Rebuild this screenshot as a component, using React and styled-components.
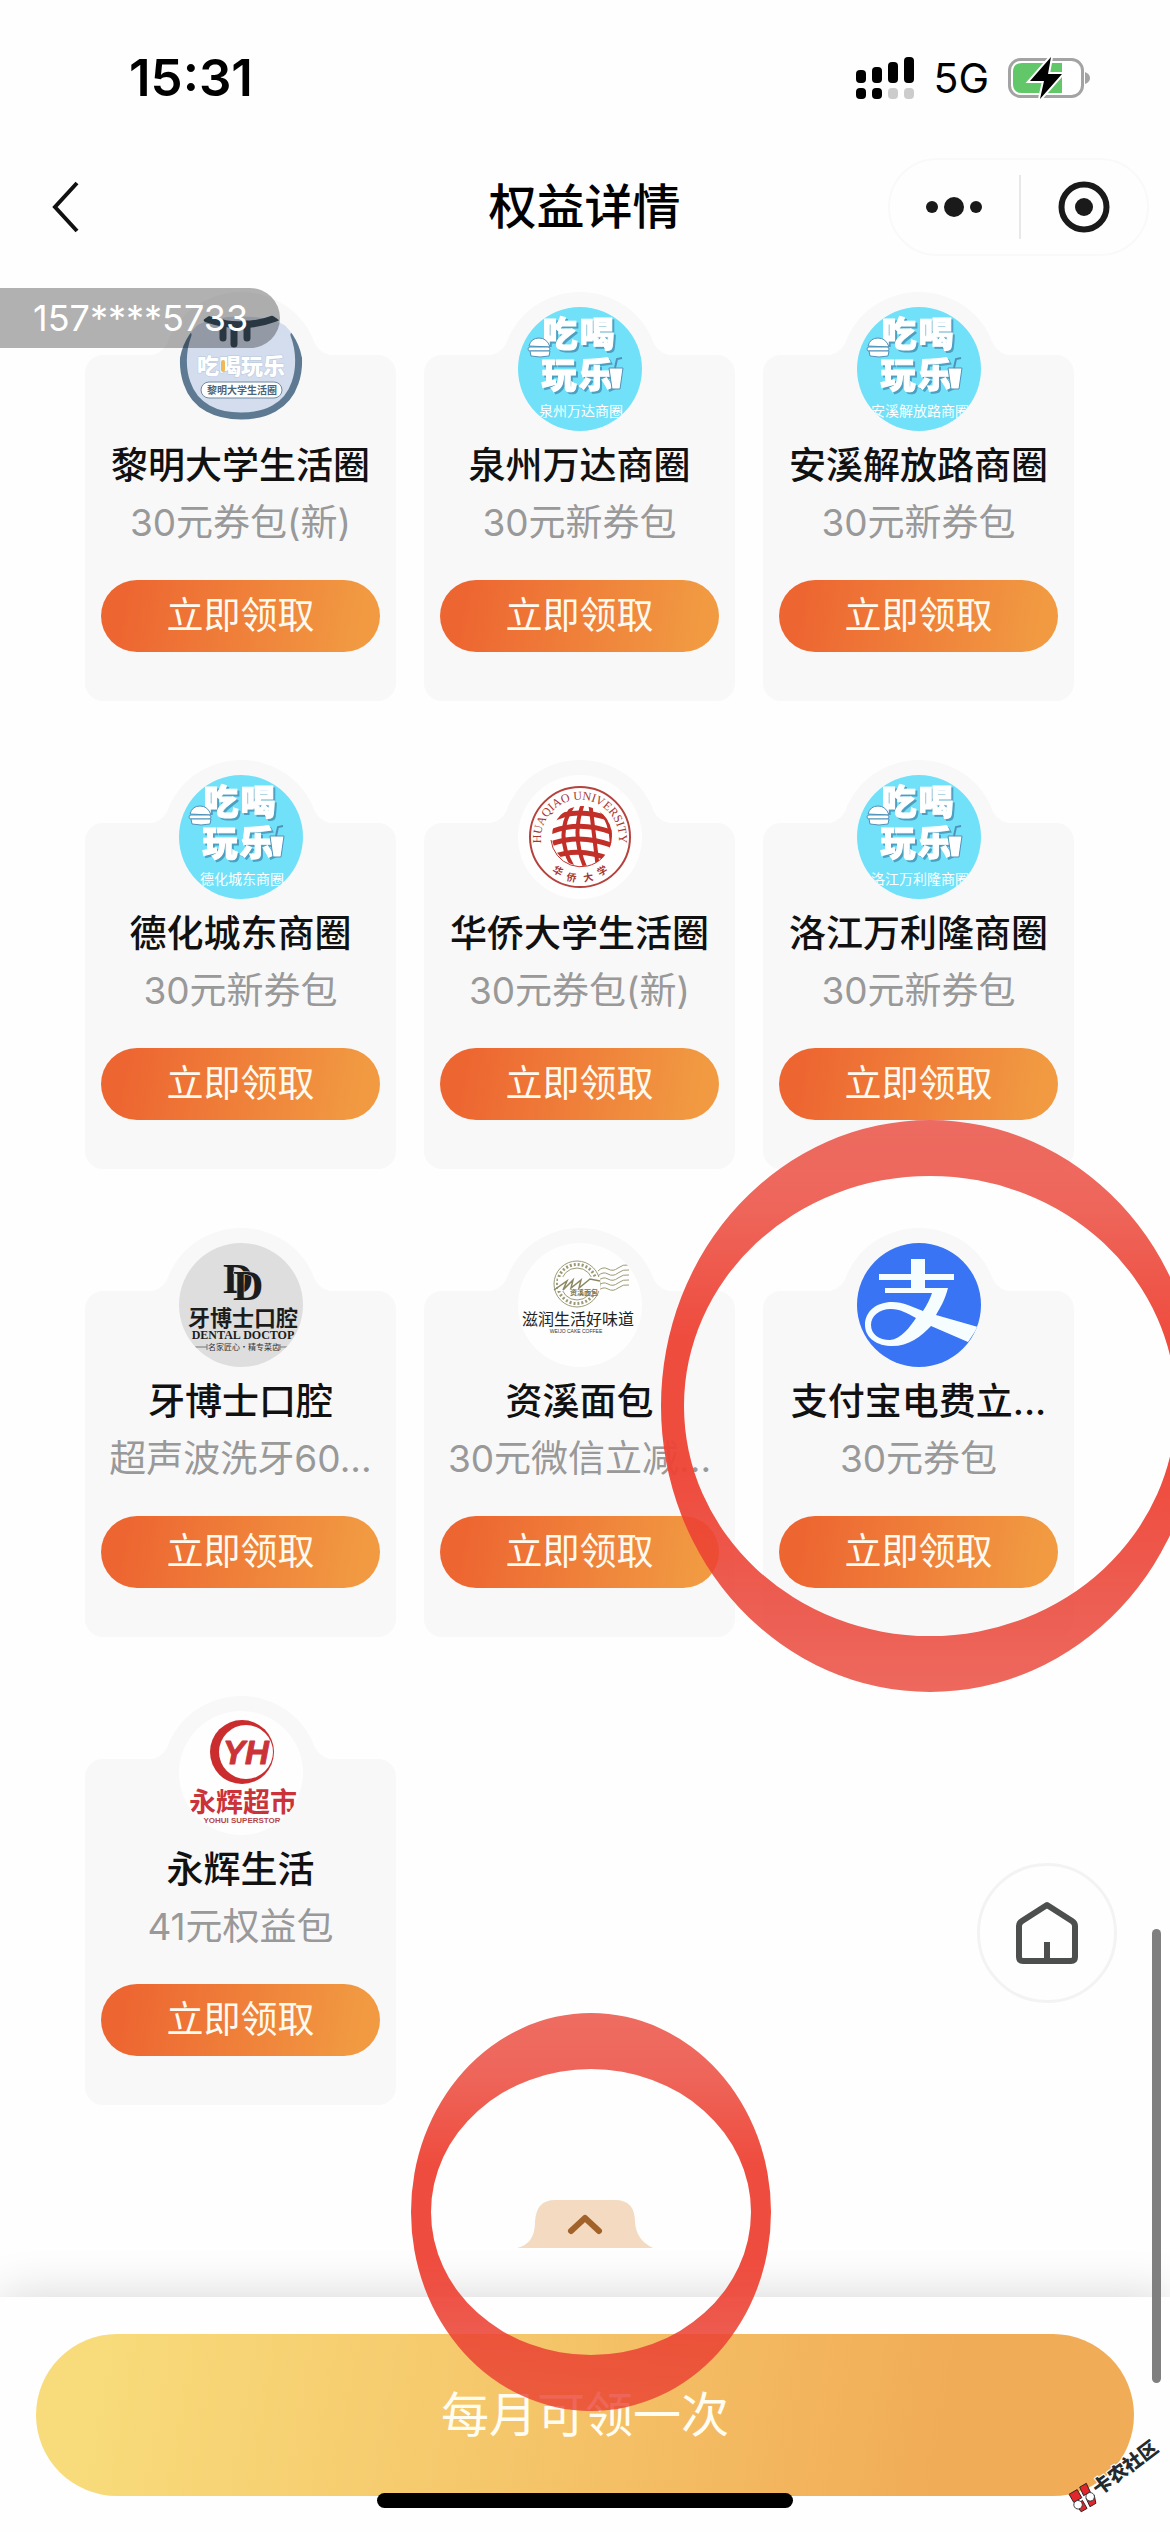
import React from "react";
import styled, { createGlobalStyle } from "styled-components";

const GlobalStyle = createGlobalStyle`
  * { box-sizing: border-box; }
  body {
    margin: 0;
    background: #fefefe;
    font-family: "Inter", "Noto Sans CJK SC", sans-serif;
    color: #161616;
  }
  button { font-family: inherit; border: 0; padding: 0; cursor: pointer; }
  h1, h2, p { margin: 0; }
`;

const Page = styled.div`
  position: relative;
  min-height: 100vh;
  display: flex;
  flex-direction: column;
  overflow: clip;
  background: #fefefe;
`;

const StatusBar = styled.div`
  height: 156px;
  padding: 0 79px 0 129px;
  display: flex;
  align-items: center;
  justify-content: space-between;
`;

const Clock = styled.time`
  font-size: 51px;
  line-height: 60px;
  font-weight: 600;
  color: #000;
`;

const StatusIcons = styled.div`
  display: flex;
  align-items: center;
  gap: 19px;
  font-size: 41px;
  line-height: 48px;
  color: #000;
`;

const NavBar = styled.header`
  height: 102px;
  padding: 0 21px 0 40px;
  display: grid;
  grid-template-columns: 241px 1fr 261px;
  align-items: center;
`;

const BackButton = styled.button`
  width: 52px;
  height: 64px;
  background: none;
  display: flex;
  align-items: center;
  justify-content: center;
`;

const NavTitle = styled.h1`
  font-size: 48px;
  line-height: 64px;
  font-weight: 500;
  text-align: center;
  color: #000;
`;

const Capsule = styled.div`
  height: 98px;
  border: 2px solid #f9f9f9;
  border-radius: 49px;
  display: grid;
  grid-template-columns: 1fr 1fr;
  align-items: center;
`;

const CapsuleButton = styled.button`
  height: 64px;
  background: none;
  display: flex;
  align-items: center;
  justify-content: center;
  border-left: ${(p) => (p.$divided ? "2px solid #e8e8e8" : "0")};
`;

const Main = styled.main`
  position: relative;
  flex: 1;
  display: flex;
  flex-direction: column;
  padding-top: 97px;
`;

const PhoneTag = styled.div`
  position: absolute;
  z-index: 2;
  left: 0;
  top: 30px;
  width: 280px;
  height: 60px;
  padding-left: 33px;
  border-radius: 0 30px 30px 0;
  background: rgba(0, 0, 0, 0.3);
  color: #fff;
  font-size: 36px;
  line-height: 60px;
`;

const Grid = styled.section`
  display: grid;
  grid-template-columns: repeat(3, 1fr);
  column-gap: 28px;
  row-gap: 122px;
  padding: 0 96px 0 85px;
`;

const Card = styled.article`
  position: relative;
  height: 346px;
  padding: 0 16px;
  border-radius: 18px;
  background: #f8f8f8;
  display: flex;
  flex-direction: column;
  align-items: center;
`;

const Badge = styled.svg`
  flex: none;
  width: 200px;
  height: 152px;
  margin-top: -63px;
`;

const CardTitle = styled.h2`
  font-size: 37px;
  line-height: 44px;
  font-weight: 500;
  white-space: nowrap;
  color: #111;
`;

const CardNote = styled.p`
  margin-top: 10px;
  font-size: 37px;
  line-height: 50px;
  color: #999;
  white-space: nowrap;
`;

const ClaimButton = styled.button`
  align-self: stretch;
  height: 72px;
  margin-top: 32px;
  border-radius: 36px;
  background: linear-gradient(100deg, #ed6531 8%, #f19a42 92%);
  color: #fffaf0;
  font-size: 37px;
  line-height: 72px;
`;

const ExpandTab = styled.button`
  position: relative;
  align-self: center;
  width: 136px;
  height: 48px;
  margin: 95px 0 49px;
  background: none;
  > svg:first-child { display: block; }
`;

const Marker = styled.svg`
  position: absolute;
  z-index: 5;
  left: calc(50% - ${(p) => p.$left}px);
  top: -${(p) => p.$up}px;
  pointer-events: none;
`;

const HomeButton = styled.button`
  position: absolute;
  right: 53px;
  bottom: 294px;
  width: 140px;
  height: 140px;
  border-radius: 50%;
  border: 3px solid #f3f3f3;
  background: #fefefe;
  display: flex;
  align-items: center;
  justify-content: center;
`;

const Footer = styled.footer`
  position: relative;
  padding: 37px 36px 36px;
  background: #fefefe;
  box-shadow: 0 0 46px rgba(0, 0, 0, 0.16);
`;

const MonthlyButton = styled.button`
  display: block;
  width: 100%;
  height: 162px;
  border-radius: 81px;
  background: linear-gradient(100deg, #f8dc7b 4%, #f5c76b 42%, #f1ac57 82%);
  color: #fffdf2;
  font-size: 48px;
  line-height: 162px;
`;

const HomeIndicator = styled.div`
  position: absolute;
  z-index: 6;
  left: 50%;
  bottom: 24px;
  width: 416px;
  height: 15px;
  margin-left: -208px;
  border-radius: 8px;
  background: #000;
`;

const ScrollThumb = styled.div`
  position: absolute;
  right: 9px;
  bottom: 149px;
  width: 9px;
  height: 454px;
  border-radius: 5px;
  background: #7f7f7f;
`;

const Watermark = styled.svg`
  position: absolute;
  z-index: 7;
  right: 0;
  bottom: 12px;
`;

const RaisedWords = styled.g`
  fill: #fff;
  stroke: #fff;
  stroke-width: 1px;
  filter: drop-shadow(2px 2px 0 #4d9fc0);
`;

const CJK = '"Noto Sans CJK SC", sans-serif';

function CellBars() {
  const bars = [[0, 13], [16, 10], [32, 5], [48, 0]];
  return (
    <svg width="58" height="42" viewBox="0 0 58 42" aria-label="signal">
      {bars.map(([x, y], i) => (
        <g key={x}>
          <rect x={x} y={y} width="10" height={26 - y} rx="4" />
          <rect x={x} y="31" width="10" height="11" rx="4" fill={i < 2 ? "#000" : "#ccc"} />
        </g>
      ))}
    </svg>
  );
}

function Battery() {
  return (
    <svg width="83" height="44" viewBox="0 0 83 44" aria-label="charging">
      <rect x="1.5" y="3.500" width="73" height="37" rx="11" fill="#fff" stroke="#a3a3a3" strokeWidth="3" />
      <path d="M14 7H54V37H14Q5 37 5 28V16Q5 7 14 7Z" fill="#61c768" />
      <path d="M77 16Q82 18 82 22T77 28Z" fill="#a3a3a3" />
      <path d="M43 1L22 25H36L32 43L54 18H40Z" fill="#000" stroke="#fff" strokeWidth="4" paintOrder="stroke" />
    </svg>
  );
}

function PotLogo({ caption }) {
  return (
    <>
      <path d="M8 26C2 44 1 62 6 77C14 101 37 109 62 109S110 101 118 77C123 62 122 44 116 26C98 4 26 4 8 26Z" fill="#d3dded" />
      <path d="M9 28C3 44 3 62 8 76C16 100 38 109 62 109S108 100 116 76C121 62 121 44 115 28" fill="none" stroke="#5e7a92" strokeWidth="7" strokeLinecap="round" />
      <path d="M28 12Q62 24 97 11" fill="none" stroke="#3c4f60" strokeWidth="7" strokeLinecap="round" />
      <path d="M44 16V31M55 18V37M68 17V31" stroke="#3c4f60" strokeWidth="7" strokeLinecap="round" />
      <text x="62" y="67" fontFamily={CJK} fontSize="22" fontWeight="900" textAnchor="middle" fill="#fff" stroke="#b9c8dc" strokeWidth="1" paintOrder="stroke">吃喝玩乐</text>
      <rect x="42" y="53" width="4" height="12" rx="2" fill="#efb95a" />
      <rect x="22" y="75" width="81" height="16" rx="8" fill="#fff" stroke="#71899f" />
      <text x="63" y="87" fontFamily={CJK} fontSize="10" fontWeight="700" textAnchor="middle" fill="#4d6478">{caption}</text>
    </>
  );
}

function PlazaLogo({ caption }) {
  const word = { fontFamily: CJK, fontSize: 35, fontWeight: 900, textAnchor: "middle" };
  return (
    <>
      <rect width="124" height="124" fill="#70e1f9" />
      <RaisedWords>
        <text x="42" y="40" {...word}>吃</text>
        <text x="79" y="40" {...word}>喝</text>
        <text x="41" y="81" {...word}>玩</text>
        <text x="78" y="81" {...word}>乐</text>
      </RaisedWords>
      <g fill="#fff" stroke="#4f91b8" strokeWidth="1">
        <path d="M11 39Q13 31 21 31T32 40Z" />
        <rect x="10" y="40" width="22" height="4" rx="2" />
        <path d="M12 44H32L31 49Q22 51 13 49Z" />
        <path d="M91 61H105L102 82H94Z" />
        <path d="M97 61L99 52L104 51" fill="none" strokeWidth="2" />
      </g>
      <text x="63" y="109" fontFamily={CJK} fontSize="14" textAnchor="middle" fill="#fff">{caption}</text>
    </>
  );
}

function UniversityLogo() {
  return (
    <>
      <rect width="124" height="124" fill="#fefefe" />
      <circle cx="62" cy="62" r="50" fill="none" stroke="#b5423d" strokeWidth="2" />
      <defs>
        <path id="university-arc" d="M25 76A39 39 0 1 1 99 76" />
        <clipPath id="globe-clip"><circle cx="64" cy="61" r="30" /></clipPath>
      </defs>
      <text fontFamily='"Liberation Serif", serif' fontSize="12" fill="#a8352f">
        <textPath href="#university-arc" startOffset="50%" textAnchor="middle">HUAQIAO UNIVERSITY</textPath>
      </text>
      <g clipPath="url(#globe-clip)" fill="none" stroke="#c22f28">
        <path d="M58 26Q34 58 56 94M66 26Q52 60 68 94M72 26Q76 60 80 94M76 26Q102 54 90 90" strokeWidth="4" />
        <path d="M32 46Q58 30 98 46M30 58Q62 44 98 59M30 70Q62 57 98 72M34 82Q62 71 94 85" strokeWidth="5" />
      </g>
      <path d="M33 65A30 30 0 0 0 84 83" fill="none" stroke="#c22f28" />
      <g fontFamily={CJK} fontSize="10" fontWeight="700" textAnchor="middle" fill="#a8352f">
        <text transform="translate(38 99) rotate(30)">华</text>
        <text transform="translate(53 106) rotate(10)">侨</text>
        <text transform="translate(71 106) rotate(-10)">大</text>
        <text transform="translate(86 99) rotate(-30)">学</text>
      </g>
    </>
  );
}

function DentalLogo() {
  return (
    <>
      <rect width="124" height="124" fill="#dedede" />
      <g fontFamily='"Liberation Serif", serif' fontSize="42" fontWeight="700" fill="#1c1c1c" stroke="#dedede" strokeWidth="1" paintOrder="stroke">
        <text x="44" y="50">D</text>
        <text x="54" y="57">D</text>
      </g>
      <text x="64" y="83" fontFamily={CJK} fontSize="22" fontWeight="700" textAnchor="middle" fill="#1c1c1c">牙博士口腔</text>
      <text x="64" y="96" fontFamily='"Liberation Serif", serif' fontSize="12" fontWeight="700" textAnchor="middle" fill="#1c1c1c">DENTAL DOCTOP</text>
      <path d="M16 104H28V101M28 104V107M112 104H101V101M101 104V107" fill="none" stroke="#777" />
      <text x="65" y="107" fontFamily={CJK} fontSize="8" textAnchor="middle" fill="#333">名家匠心·精专菜齿</text>
    </>
  );
}

function BakeryLogo() {
  return (
    <>
      <rect width="124" height="124" fill="#fefefe" />
      <g fill="none" stroke="#9c9a76" strokeWidth="1">
        <circle cx="59" cy="41" r="23" />
        <circle cx="59" cy="41" r="16" />
        <circle cx="59" cy="41" r="19.500" strokeWidth="3" strokeDasharray="2 2" />
        {[26, 31, 36, 41, 46].map((y) => (
          <path key={y} d={`M80 ${y + 2}q5 -5 10 -2t10 -1t11 -3`} />
        ))}
      </g>
      <rect x="40" y="34" width="42" height="14" fill="#fefefe" />
      <path d="M36 47L49 38L45 47L55 37L53 45L63 37L61 45L72 36L82 38" fill="none" stroke="#8a8862" strokeWidth="1.500" />
      <text x="66" y="52" fontFamily={CJK} fontSize="7" fontWeight="700" textAnchor="middle" fill="#77754f">资溪面包</text>
      <text x="60" y="82" fontFamily={CJK} fontSize="16" textAnchor="middle" fill="#222">滋润生活好味道</text>
      <text x="58" y="90" fontFamily='"Liberation Sans", sans-serif' fontSize="5" textAnchor="middle" fill="#333">WEIJO CAKE COFFEE</text>
    </>
  );
}

function AlipayLogo() {
  return (
    <>
      <rect width="124" height="124" fill="#3874f4" />
      <g fill="#f6fdff">
        <rect x="54" y="16" width="14" height="34" />
        <rect x="22" y="31" width="75" height="6" />
        <path d="M28 45H91C88 57 83 65 79 72L121 84L111 99L74 83C64 94 50 104 33 103C17 102 8 93 8 82C8 68 20 59 35 59C46 59 56 64 66 68C70 62 73 56 75 50H28Z" />
      </g>
      <path d="M59 75C50 70 43 66 34 66C22 66 14 73 14 82C14 91 22 97 33 97C44 96 53 84 59 75Z" fill="#3874f4" />
    </>
  );
}

function YonghuiLogo() {
  return (
    <>
      <rect width="124" height="124" fill="#fefefe" />
      <circle cx="63" cy="41" r="32" fill="#cb2d2e" />
      <circle cx="67" cy="41" r="27" fill="#fefefe" />
      <text x="67" y="53" fontFamily='"Liberation Sans", sans-serif' fontSize="33" fontWeight="700" fontStyle="italic" textAnchor="middle" fill="#cb3338" stroke="#cb3338" strokeLinejoin="round">YH</text>
      <text x="64" y="101" fontFamily={CJK} fontSize="27" fontWeight="700" textAnchor="middle" fill="#cb3338">永辉超市</text>
      <text x="63" y="112" fontFamily='"Liberation Sans", sans-serif' fontSize="8" fontWeight="700" textAnchor="middle" fill="#b5474b">YOHUI SUPERSTOR</text>
    </>
  );
}

const offers = [
  { title: "黎明大学生活圈", note: "30元券包(新)", Logo: PotLogo, caption: "黎明大学生活圈" },
  { title: "泉州万达商圈", note: "30元新券包", Logo: PlazaLogo, caption: "泉州万达商圈" },
  { title: "安溪解放路商圈", note: "30元新券包", Logo: PlazaLogo, caption: "安溪解放路商圈" },
  { title: "德化城东商圈", note: "30元新券包", Logo: PlazaLogo, caption: "德化城东商圈" },
  { title: "华侨大学生活圈", note: "30元券包(新)", Logo: UniversityLogo },
  { title: "洛江万利隆商圈", note: "30元新券包", Logo: PlazaLogo, caption: "洛江万利隆商圈" },
  { title: "牙博士口腔", note: "超声波洗牙60...", Logo: DentalLogo },
  { title: "资溪面包", note: "30元微信立减...", Logo: BakeryLogo },
  { title: "支付宝电费立...", note: "30元券包", Logo: AlipayLogo, marked: true },
  { title: "永辉生活", note: "41元权益包", Logo: YonghuiLogo },
];

function Ring({ id, rx, ry, innerRx, innerRy, left, up }) {
  const oval = (a, b) =>
    `M${rx - a} ${ry}a${a} ${b} 0 1 0 ${2 * a} 0a${a} ${b} 0 1 0 ${-2 * a} 0Z`;
  return (
    <Marker $left={left} $up={up} width={rx * 2} height={ry * 2} viewBox={`0 0 ${rx * 2} ${ry * 2}`} aria-hidden="true">
      <defs>
        <linearGradient id={id} x1="0" y1="0" x2="0" y2="1">
          <stop offset="0" stopColor="#e93e30" stopOpacity="0.76" />
          <stop offset="0.15" stopColor="#ea4032" stopOpacity="0.8" />
          <stop offset="0.38" stopColor="#ee4334" stopOpacity="0.95" />
          <stop offset="0.62" stopColor="#ee4334" stopOpacity="0.95" />
          <stop offset="0.85" stopColor="#ea4032" stopOpacity="0.84" />
          <stop offset="1" stopColor="#e93e30" stopOpacity="0.78" />
        </linearGradient>
      </defs>
      <path d={oval(rx, ry) + oval(innerRx, innerRy)} fill={`url(#${id})`} fillRule="evenodd" />
    </Marker>
  );
}

function OfferCard({ offer, index }) {
  const { title, note, Logo, caption, marked } = offer;
  const clip = `logo-clip-${index}`;
  return (
    <Card>
      <Badge viewBox="0 0 200 152" aria-hidden="true">
        <clipPath id={clip}><circle cx="62" cy="62" r="62" /></clipPath>
        <path d="M4 64Q20 63 26 52A78 76 0 0 1 174 52Q180 63 196 64V80H4Z" fill="#f8f8f8" />
        <g transform="translate(38 15)">
          <g clipPath={`url(#${clip})`}><Logo caption={caption} /></g>
        </g>
      </Badge>
      <CardTitle>{title}</CardTitle>
      <CardNote>{note}</CardNote>
      <ClaimButton type="button">立即领取</ClaimButton>
      {marked && <Ring id="ring-offer" rx={269} ry={286} innerRx={246} innerRy={230} left={258} up={171} />}
    </Card>
  );
}

export default function App() {
  return (
    <Page>
      <GlobalStyle />
      <StatusBar>
        <Clock>15:31</Clock>
        <StatusIcons>
          <CellBars />
          <span>5G</span>
          <Battery />
        </StatusIcons>
      </StatusBar>
      <NavBar>
        <BackButton type="button" aria-label="返回">
          <svg width="28" height="52" viewBox="0 0 28 52">
            <path d="M25 2L3 26L25 50" fill="none" stroke="#111" strokeWidth="4" />
          </svg>
        </BackButton>
        <NavTitle>权益详情</NavTitle>
        <Capsule>
          <CapsuleButton type="button" aria-label="更多">
            <svg width="58" height="22" viewBox="0 0 58 22" fill="#1a1a1a">
              <circle cx="7" cy="11" r="6" />
              <circle cx="29" cy="11" r="10" />
              <circle cx="51" cy="11" r="6" />
            </svg>
          </CapsuleButton>
          <CapsuleButton type="button" aria-label="关闭" $divided>
            <svg width="52" height="52" viewBox="0 0 52 52">
              <circle cx="26" cy="26" r="22.500" fill="none" stroke="#1a1a1a" strokeWidth="6" />
              <circle cx="26" cy="26" r="9" fill="#1a1a1a" />
            </svg>
          </CapsuleButton>
        </Capsule>
      </NavBar>
      <Main>
        <PhoneTag>157****5733</PhoneTag>
        <Grid>
          {offers.map((offer, i) => (
            <OfferCard key={offer.title} offer={offer} index={i} />
          ))}
        </Grid>
        <ExpandTab type="button" aria-label="展开">
          <svg width="136" height="48" viewBox="0 0 136 48">
            <path d="M0 48Q18 44 18 22Q19 0 38 0H98Q118 0 118 22Q119 40 136 48Z" fill="#f3dac1" />
            <path d="M54 31L68 18L82 31" fill="none" stroke="#a2632b" strokeWidth="6" strokeLinecap="round" strokeLinejoin="round" />
          </svg>
          <Ring id="ring-tab" rx={180} ry={199} innerRx={160} innerRy={143} left={174} up={187} />
        </ExpandTab>
        <HomeButton type="button" aria-label="首页">
          <svg width="64" height="64" viewBox="0 0 64 64" fill="none" stroke="#4d4f4f" strokeWidth="6" strokeLinejoin="round">
            <path d="M32 4L57 20Q60 22 60 25V56Q60 60 56 60H8Q4 60 4 56V25Q4 22 7 20Z" />
            <path d="M32 41V60" />
          </svg>
        </HomeButton>
      </Main>
      <Footer>
        <MonthlyButton type="button">每月可领一次</MonthlyButton>
        <HomeIndicator />
      </Footer>
      <ScrollThumb />
      <Watermark width="104" height="90" viewBox="0 0 104 90" aria-hidden="true">
        <g transform="translate(17 68) rotate(-30) scale(0.85)">
          <path d="M-12 -12H-1V-1H-12ZM3 -13H12L11 -2H2ZM-11 4L-2 2V13H-10ZM3 2L13 4L10 13H2Z" fill="#e3262b" stroke="#222" />
          <circle cx="8" cy="3" r="5" fill="#fff" stroke="#333" />
          <circle cx="-9" cy="4" r="5" fill="#fff" stroke="#333" />
        </g>
        <text transform="translate(33 66) rotate(-37)" fontFamily={CJK} fontSize="19" fontWeight="900" fill="#222b2e" stroke="#fff" strokeWidth="2" paintOrder="stroke">卡农社区</text>
      </Watermark>
    </Page>
  );
}
